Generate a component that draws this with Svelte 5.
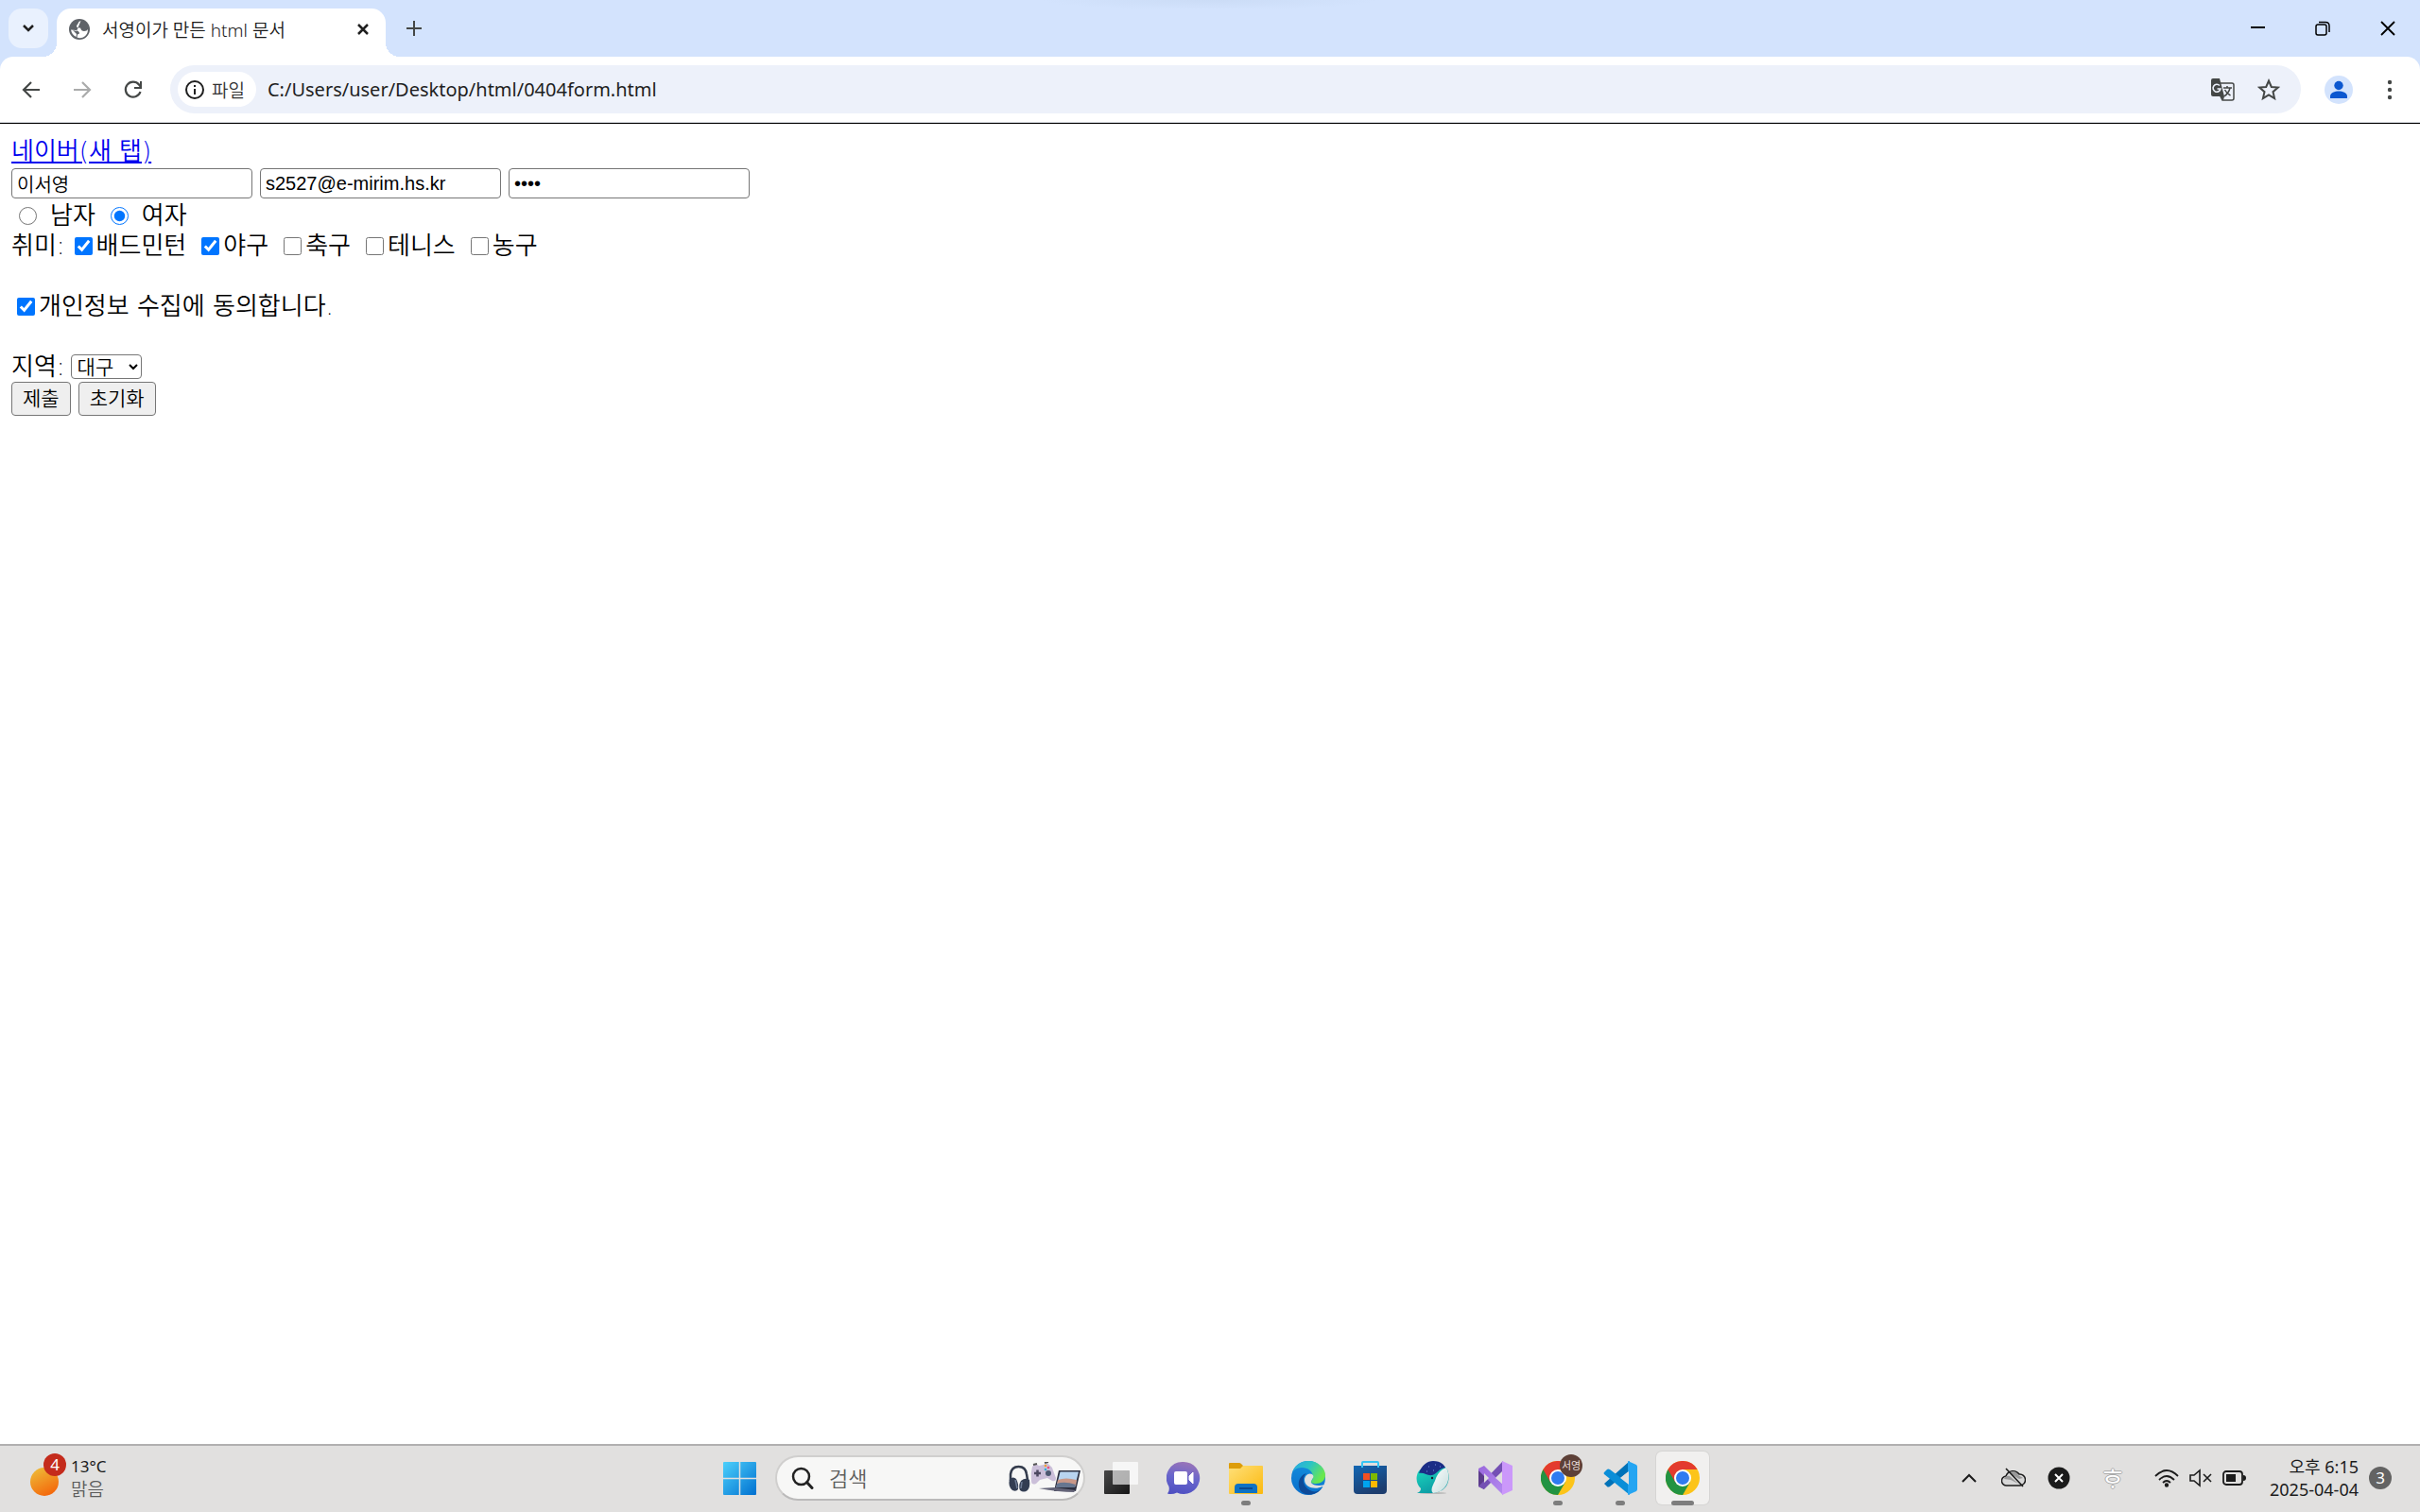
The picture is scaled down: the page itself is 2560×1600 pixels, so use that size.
<script>
  let tabTitle = '서영이가 만든 html 문서';
  let address = 'C:/Users/user/Desktop/html/0404form.html';
  let userName = '이서영';
  let email = 's2527@e-mirim.hs.kr';
  let password = '2527';
  let gender = '여자';
  let agree = true;
  let region = '대구';
  let keyword = '';
  let hobbies = [
    { name: '배드민턴', checked: true },
    { name: '야구', checked: true },
    { name: '축구', checked: false },
    { name: '테니스', checked: false },
    { name: '농구', checked: false }
  ];
  let regions = ['서울', '대구', '부산'];

  // state: '' = closed, 'open' = running, 'active' = in front
  let apps = [
    { id: 'taskview', label: '작업 보기', state: '' },
    { id: 'chat', label: '채팅', state: '' },
    { id: 'explorer', label: '파일 탐색기', state: 'open' },
    { id: 'edge', label: 'Edge', state: '' },
    { id: 'store', label: 'Store', state: '' },
    { id: 'whale', label: '웨일', state: '' },
    { id: 'vs', label: 'Visual Studio', state: '' },
    { id: 'chrome', label: 'Chrome 서영', state: 'open', badge: '서영' },
    { id: 'vscode', label: 'Visual Studio Code', state: 'open' },
    { id: 'chrome', label: 'Chrome', state: 'active' }
  ];
</script>

<svelte:head><title>{tabTitle}</title></svelte:head>

<!-- shared gradients -->
<svg class="defs" width="0" height="0" aria-hidden="true">
  <defs>
    <linearGradient id="win" x1="0" y1="0" x2="1" y2="1"><stop offset="0" stop-color="#4cd0fb" /><stop offset="1" stop-color="#0070d0" /></linearGradient>
    <linearGradient id="sun" x1="0.2" y1="0" x2="0.7" y2="1"><stop offset="0" stop-color="#eebb38" /><stop offset="1" stop-color="#f4650a" /></linearGradient>
    <linearGradient id="dark" x1="0" y1="0" x2="1" y2="1"><stop offset="0" stop-color="#484848" /><stop offset="1" stop-color="#161616" /></linearGradient>
    <linearGradient id="chatg" x1="0.6" y1="0" x2="0.4" y2="1"><stop offset="0" stop-color="#9a74b8" /><stop offset="0.5" stop-color="#6866cc" /><stop offset="1" stop-color="#4f50c2" /></linearGradient>
    <linearGradient id="folder" x1="0" y1="0" x2="1" y2="1"><stop offset="0" stop-color="#ffe07a" /><stop offset="1" stop-color="#fbb90e" /></linearGradient>
    <linearGradient id="edge1" x1="0" y1="0" x2="1" y2="0.5"><stop offset="0" stop-color="#2ba6e4" /><stop offset="0.5" stop-color="#2bc4c4" /><stop offset="1" stop-color="#6be84c" /></linearGradient>
    <linearGradient id="edge2" x1="0.5" y1="0" x2="0.3" y2="1"><stop offset="0" stop-color="#1590df" /><stop offset="1" stop-color="#0a6fcb" /></linearGradient>
    <linearGradient id="storeg" x1="0" y1="0" x2="0.5" y2="1"><stop offset="0" stop-color="#1267b4" /><stop offset="1" stop-color="#1d3d6e" /></linearGradient>
    <linearGradient id="whale1" x1="0" y1="0" x2="0.5" y2="1"><stop offset="0" stop-color="#1de0c0" /><stop offset="1" stop-color="#0c9aa4" /></linearGradient>
    <linearGradient id="whale2" x1="0" y1="0" x2="1" y2="1"><stop offset="0" stop-color="#ffffff" /><stop offset="1" stop-color="#c4dcdc" /></linearGradient>
    <linearGradient id="vs1" x1="0" y1="0" x2="1" y2="1"><stop offset="0" stop-color="#9a68dc" /><stop offset="1" stop-color="#b48af0" /></linearGradient>
  </defs>
</svg>

{#snippet appIcon(id)}
  <svg class="app-icon" viewBox="0 0 36 36" aria-hidden="true">
    {#if id === 'taskview'}
      <rect x="0" y="10" width="27" height="25" rx="1" fill="url(#dark)" />
      <rect x="9" y="1" width="27" height="24" rx="1" fill="#fff" fill-opacity="0.7" />
      <path d="M9 10h18v15H9z" fill="#999" fill-opacity="0.35" />
    {:else if id === 'chat'}
      <path d="M18 1a17 17 0 1 1-7 32.400Q6 36 1 34.500Q3.500 32 2.500 27A17 17 0 0 1 18 1z" fill="url(#chatg)" />
      <rect x="8" y="11" width="14" height="14" rx="2" fill="#fff" />
      <path d="M24 16l4-4v12l-4-4z" fill="#fff" stroke="#fff" stroke-linejoin="round" />
    {:else if id === 'explorer'}
      <path d="M0 3q0-1 1-1h10q1 0 2 1l2 2v6H0z" fill="#dd9d0a" />
      <path d="M0 8h12l3-3h20q1 0 1 1v28q0 1-1 1H1q-1 0-1-1z" fill="url(#folder)" />
      <path d="M6 34v-6q0-4 4-4h16q4 0 4 4v6z" fill="#0e72c4" />
      <path d="M11 29h14" stroke="#0a4a90" stroke-width="2" />
    {:else if id === 'edge'}
      <circle cx="18" cy="18" r="18" fill="url(#edge2)" />
      <path d="M1 12C4 4 10 0 18 0c11 0 18 8 18 15 0 6-5 9-10 9-4 0-5-1-5-2 0-2 2-2 2-5 0-6-5-10-12-10C6 7 2 10 1 12z" fill="url(#edge1)" />
      <path d="M16 13c-5 4-5 15 6 19 4 1 7 0 10-3-5 7-16 9-22 3C5 24 9 15 16 13z" fill="#0d4a98" />
      <path d="M22 14c4 3-2 6-1 9 2 3 8 4 15 2v5l-3-3c-8 4-19 1-19-7 0-4 4-8 8-6z" fill="#e1e0df" />
    {:else if id === 'store'}
      <path d="M9 7V2q0-1 1-1h15q1 0 1 1v5" fill="none" stroke="#35c5f4" stroke-width="2" />
      <path d="M0 5h35v26q0 4-4 4H4q-4 0-4-4z" fill="url(#storeg)" />
      <path d="M9 7V5M26 7V5" stroke="#35c5f4" stroke-width="2" />
      <path d="M10 13h7v7h-7z" fill="#f25022" /><path d="M18 13h7v7h-7z" fill="#7fba00" />
      <path d="M10 21h7v7h-7z" fill="#00a4ef" /><path d="M18 21h7v7h-7z" fill="#ffb900" />
    {:else if id === 'whale'}
      <ellipse cx="18" cy="34" rx="14" ry="1" fill="#b9b9b8" />
      <path d="M2 12C8 3 27 0 33 9c5 13-2 24-15 25H1c3-1 4-3 4-5C1 25 -1 19 2 12z" fill="url(#whale1)" />
      <path d="M32 7c6 12 0 26-14 27-3-3-1-7 2-13 2-7 6-12 12-14z" fill="url(#whale2)" />
      <path d="M3 13C6 4 12 0 18 0c6 0 10 2 13 7-7 1-9 7-14 8-5 1-8-3-14-2z" fill="#1b2d86" />
      <path d="M13 6h1M20 4h1M18 10h1M11 11h1M25 6h1" stroke="#7f92e0" />
      <circle cx="17" cy="18" r="1.200" fill="#123" />
    {:else if id === 'vs'}
      <path d="M0 9l6-3v24l-6-3z" fill="#5c3c8c" />
      <path d="M0 27l6 3L26 10V0z" fill="#7450b4" />
      <path d="M6 5l20 20v11L0 10V8z" fill="url(#vs1)" />
      <path d="M25 0l11 5v26l-11 5z" fill="#cb98fa" />
      <path d="M6 13l5 5-5 5zM25 12v12l-7-6z" fill="#e1e0df" />
    {:else if id === 'chrome'}
      <circle cx="18" cy="18" r="18" fill="#fcc419" />
      <path d="M2.400 9A18 18 0 0 0 18 36l7.800-13.500L18 18z" fill="#229342" />
      <path d="M2.400 9A18 18 0 0 1 33.600 9H18l-7.800 13.500z" fill="#e33b2e" />
      <circle cx="18" cy="18" r="9" fill="#fff" />
      <circle cx="18" cy="18" r="7" fill="#2f7bf0" />
    {:else if id === 'vscode'}
      <path d="M1 24l3 3q1 1 3 0L28 10V0z" fill="#0072b8" />
      <path d="M1 12l3-3q1-1 3 0l21 16v11L1 14q-1-1 0-2z" fill="#0a8ed8" />
      <path d="M26 0l9 4q1 1 1 2v24q0 1-1 2l-9 4z" fill="#25a5f2" />
      <path d="M27 11v14l-9-7z" fill="#e1e0df" />
    {/if}
  </svg>
{/snippet}

<div class="screen">
  <header>
    <div class="tabs">
      <button class="tab-search" aria-label="탭 검색">
        <svg width="14" height="14" viewBox="0 0 14 14"><path d="M2 4l5 5 5-5" fill="none" stroke="#1f1f1f" stroke-width="2.500" /></svg>
      </button>
      <div class="tab">
        <svg width="22" height="22" viewBox="0 0 22 22" aria-hidden="true">
          <circle cx="11" cy="11" r="11" fill="#5f6368" />
          <path d="M12.500 2Q10 2.500 9.500 5 7.500 7 8 8.500 9 9.500 12 9.500 13 13 16 13q3 0 4-2Q20 17 15 19.500 11 21 8.500 19.500L9 16.500 11 15.500Q11 12.500 7 12L2 11.500Q3 17 7.500 19L8 16 4 12 8 13z" fill="#fff" />
        </svg>
        <span class="tab-title">{tabTitle}</span>
        <button class="plain" aria-label="탭 닫기">
          <svg width="14" height="14" viewBox="0 0 14 14"><path d="M2 2l10 10M12 2L2 12" stroke="#1f1f1f" stroke-width="2.500" /></svg>
        </button>
      </div>
      <button class="plain new-tab" aria-label="새 탭">
        <svg width="16" height="16" viewBox="0 0 16 16"><path d="M8 0v16M0 8h16" stroke="#444746" stroke-width="2" /></svg>
      </button>
      <div class="window-buttons">
        <button class="plain" aria-label="최소화"><svg width="16" height="16" viewBox="0 0 16 16"><path d="M1 7h15" stroke="#000" stroke-width="2" /></svg></button>
        <button class="plain" aria-label="이전 크기로"><svg width="16" height="16" viewBox="0 0 16 16"><g fill="none" stroke="#000" stroke-width="1.500"><rect x="1" y="4" width="11" height="11" rx="2" /><path d="M4 1.500h7q4 0 4 4V12" /></g></svg></button>
        <button class="plain" aria-label="닫기"><svg width="16" height="16" viewBox="0 0 16 16"><path d="M1 1l14 14M15 1L1 15" stroke="#000" stroke-width="1.800" /></svg></button>
      </div>
    </div>

    <div class="toolbar">
      <div class="nav">
        <button class="plain" aria-label="뒤로"><svg width="20" height="20" viewBox="0 0 20 20"><path d="M19 10H2M10 2l-8 8 8 8" fill="none" stroke="#444746" stroke-width="2.200" /></svg></button>
        <button class="plain" aria-label="앞으로"><svg width="20" height="20" viewBox="0 0 20 20"><path d="M1 10h17M10 2l8 8-8 8" fill="none" stroke="#aaabab" stroke-width="2.200" /></svg></button>
        <button class="plain" aria-label="새로고침"><svg width="20" height="20" viewBox="0 0 20 20"><path d="M17.500 12A8 8 0 1 1 16 4.500L18 7" fill="none" stroke="#444746" stroke-width="2.200" /><path d="M19 1v8h-8V7h6V1z" fill="#444746" /></svg></button>
      </div>
      <div class="omnibox">
        <button class="chip">
          <svg width="20" height="20" viewBox="0 0 20 20"><circle cx="10" cy="10" r="9" fill="none" stroke="#1f1f1f" stroke-width="2" /><path d="M10 9v6M10 5v2" stroke="#1f1f1f" stroke-width="2" /></svg>
          파일
        </button>
        <input class="address" aria-label="주소" bind:value={address} />
        <button class="plain" aria-label="번역">
          <svg width="26" height="26" viewBox="0 0 26 26">
            <path d="M11 6h12q2 0 2 2v14q0 2-2 2H13L10 18" fill="none" stroke="#444746" stroke-width="1.500" />
            <path d="M3 1h7l5 19H3q-2 0-2-2V3q0-2 2-2z" fill="#444746" />
            <path d="M15 20h-4l3 4z" fill="#444746" />
            <path d="M10 8.500a4 4 0 1 0 1 3.500H7.500" fill="none" stroke="#edf1fa" stroke-width="1.600" />
            <path d="M14 11h9M18 9v2M21 11q-1 5-6 9M15.500 13q2 4 6 6" fill="none" stroke="#444746" stroke-width="1.500" />
          </svg>
        </button>
        <button class="plain" aria-label="북마크">
          <svg width="24" height="24" viewBox="0 0 24 24"><path d="M12 2.500l2.800 6.500 7 .6-5.300 4.600 1.600 6.900-6.100-3.700-6.100 3.700 1.600-6.900L2.200 9.600l7-.6z" fill="none" stroke="#444746" stroke-width="2" /></svg>
        </button>
      </div>
      <button class="plain profile" aria-label="프로필">
        <svg width="30" height="30" viewBox="0 0 30 30"><circle cx="15" cy="15" r="15" fill="#d3e3fd" /><circle cx="15" cy="10.500" r="4.700" fill="#0b57d0" /><path d="M6 24v-2c0-4 5-5.500 9-5.500s9 1.500 9 5.500v2z" fill="#0b57d0" /></svg>
      </button>
      <button class="plain" aria-label="메뉴">
        <svg width="6" height="22" viewBox="0 0 6 22" fill="#444746"><circle cx="3" cy="3" r="2.200" /><circle cx="3" cy="11" r="2.200" /><circle cx="3" cy="19" r="2.200" /></svg>
      </button>
    </div>
  </header>

  <main>
    <form on:submit|preventDefault>
      <div class="row"><a href="https://www.naver.com" target="_blank">네이버(새 탭)</a></div>
      <div class="row fields">
        <input type="text" aria-label="이름" bind:value={userName} />
        <input type="email" aria-label="이메일" bind:value={email} />
        <input type="password" aria-label="비밀번호" bind:value={password} />
      </div>
      <div class="row radios">
        <label><input type="radio" name="gender" value="남자" bind:group={gender} />남자</label>
        <label><input type="radio" name="gender" value="여자" bind:group={gender} />여자</label>
      </div>
      <div class="row hobbies">
        <span>취미:</span>
        {#each hobbies as hobby}
          <label><input type="checkbox" bind:checked={hobby.checked} />{hobby.name}</label>
        {/each}
      </div>
      <div class="row consent">
        <label><input type="checkbox" bind:checked={agree} />개인정보 수집에 동의합니다.</label>
      </div>
      <div class="row region">
        <label for="region">지역:</label>
        <select id="region" bind:value={region}>
          {#each regions as r}
            <option value={r}>{r}</option>
          {/each}
        </select>
      </div>
      <div class="buttons">
        <button type="submit">제출</button>
        <button type="reset">초기화</button>
      </div>
    </form>
  </main>

  <footer>
    <div class="weather">
      <svg width="40" height="40" viewBox="0 0 40 40" aria-hidden="true"><circle cx="15" cy="24" r="15" fill="url(#sun)" /></svg>
      <span class="alert">4</span>
      <div class="weather-text">
        <span>13°C</span>
        <span class="sky">맑음</span>
      </div>
    </div>

    <div class="center">
      <button class="slot" aria-label="시작">
        <svg class="app-icon" viewBox="0 0 36 36"><rect x="1" y="1" width="35" height="35" rx="1" fill="url(#win)" /><path d="M18.500 1v35M1 18.500h35" stroke="#e1e0df" stroke-width="1.500" /></svg>
      </button>
      <label class="search">
        <svg width="24" height="24" viewBox="0 0 24 24"><circle cx="10.500" cy="10.500" r="8.500" fill="none" stroke="#222" stroke-width="2.500" /><path d="M16.500 16.500l5.500 6" stroke="#222" stroke-width="3" stroke-linecap="round" /></svg>
        <input aria-label="검색" placeholder="검색" bind:value={keyword} />
        <svg width="77" height="34" viewBox="0 0 77 34" aria-hidden="true">
          <path d="M3 20V13Q4 5 11.500 5T20 13l1 6" fill="none" stroke="#333b4c" stroke-width="2.500" />
          <path d="M2 18q4-3 7 0 3 6 2 11-2 3-6 1-5-4-3-12zM14 20q5-4 9-1 1 8-2 11-4 3-8 0-2-5 1-10z" fill="#333d52" />
          <path d="M8 19l2 9M15 21l-1 7" stroke="#6c7a94" stroke-width="1.500" />
          <path d="M26 5q3-4 7-1l5-1q3-3 6 0 3 2 4 6l3 8q0 4-4 3l-5-3-8 2-4 4q-5 2-5-3-1-8 1-15z" fill="#cbbfd9" />
          <path d="M27 3l4-1M39 1l4-1" stroke="#555" stroke-width="2" />
          <path d="M28 12h7M31.500 8.500v7" stroke="#4c4860" stroke-width="2.500" />
          <circle cx="43" cy="12" r="3" fill="#4c5870" /><circle cx="40" cy="4" r="1.300" fill="#f0a030" /><circle cx="43" cy="6" r="1.300" fill="#e45080" /><circle cx="40" cy="8" r="1.300" fill="#30b0d0" />
          <path d="M54 9h23l-5 22H49z" fill="#2c3040" />
          <path d="M55.500 10.500H75l-4 16H51.500z" fill="#b8d4f0" />
          <path d="M53 19q8-3 20 0l-1 7H51.500z" fill="#c99888" /><path d="M52 23q8-3 20 1l-1 3H51z" fill="#667690" />
          <path d="M33 28l16-1 23 3-2 2q-16 0-37-4z" fill="#646478" />
        </svg>
      </label>
      {#each apps as app}
        <button class="slot {app.state}" aria-label={app.label}>
          {@render appIcon(app.id)}
          {#if app.badge}<span class="app-badge">{app.badge}</span>{/if}
        </button>
      {/each}
    </div>

    <div class="tray">
      <button class="plain" aria-label="숨겨진 아이콘"><svg width="18" height="12" viewBox="0 0 18 12"><path d="M2 10l7-7 7 7" fill="none" stroke="#1b1b1b" stroke-width="2" /></svg></button>
      <svg class="cloud" width="26" height="22" viewBox="0 0 26 22" aria-label="OneDrive" role="img">
        <path d="M6 19a5 5 0 0 1-1-10 8 8 0 0 1 14-2 6 6 0 0 1 1 12z" fill="#d8d8d8" stroke="#1b1b1b" stroke-width="1.500" />
        <path d="M3 12Q5 8 9 9L18 17 10 13z" fill="#999" /><path d="M9 5q6-3 9 3l5 3-4 1-7-4z" fill="#999" />
        <path d="M5 1l18 19" stroke="#1b1b1b" stroke-width="1.600" />
      </svg>
      <svg width="24" height="24" viewBox="0 0 24 24" aria-hidden="true"><circle cx="12" cy="12" r="11.500" fill="#1b1b1b" /><path d="M8 8l8 8M16 8l-8 8" stroke="#fff" stroke-width="2" /></svg>
      <span class="ime">ᄒᆞ</span>
      <div class="status">
        <svg width="26" height="20" viewBox="0 0 26 20" fill="none" stroke="#1b1b1b" stroke-width="1.800" aria-hidden="true"><path d="M1 8q12-12 24 0M5 12q8-8 16 0M9 15q4-4 8 0" /><circle cx="13" cy="17.500" r="1.300" fill="#1b1b1b" /></svg>
        <svg width="24" height="20" viewBox="0 0 24 20" fill="none" stroke="#1b1b1b" stroke-width="1.600" aria-hidden="true"><path d="M1 7h4l6-5v16l-6-5H1zM15 6l8 8M23 6l-8 8" /></svg>
        <svg width="26" height="18" viewBox="0 0 26 18" aria-hidden="true"><rect x="1" y="2" width="20" height="14" rx="3" fill="none" stroke="#1b1b1b" stroke-width="1.800" /><path d="M4 5h10v8H4zM22 6q3 0 3 3t-3 3z" fill="#1b1b1b" /></svg>
      </div>
      <div class="clock">
        <span>오후 6:15</span>
        <span>2025-04-04</span>
      </div>
      <span class="count">3</span>
    </div>
  </footer>
</div>

<style>
  :global(body) {
    margin: 0;
    background: #fff;
  }

  .defs {
    position: absolute;
  }

  .screen {
    display: flex;
    flex-direction: column;
    min-height: 100vh;
    font-family: "Noto Sans", "Noto Sans CJK KR", sans-serif;
    color: #1b1b1b;
  }

  button, input, select {
    font-family: inherit;
    font-weight: inherit;
  }

  svg {
    display: block;
    flex-shrink: 0;
  }

  .plain {
    padding: 0;
    border: none;
    background: none;
  }

  header {
    background: #d3e3fd;
    border-bottom: 1px solid #000;
  }

  .tabs {
    display: flex;
    align-items: center;
    height: 60px;
    padding-left: 9px;
    background: radial-gradient(ellipse 180px 10px at 50% 0, #cbdcf6, #d3e3fd);
  }

  .tab-search {
    display: grid;
    place-items: center;
    width: 42px;
    height: 42px;
    padding: 0;
    border: none;
    border-radius: 14px;
    background: #e9f1fe;
  }

  .tab {
    position: relative;
    display: flex;
    align-items: center;
    align-self: flex-end;
    box-sizing: border-box;
    width: 348px;
    height: 51px;
    margin-left: 9px;
    padding: 0 17px 8px 13px;
    border-radius: 15px 15px 0 0;
    background: #fff;
  }

  /* curved feet of the active tab */
  .tab::before, .tab::after {
    content: "";
    position: absolute;
    bottom: 0;
    width: 15px;
    height: 15px;
  }

  .tab::before {
    right: 100%;
    background: radial-gradient(circle at 0 0, transparent 15px, #fff 15px);
  }

  .tab::after {
    left: 100%;
    background: radial-gradient(circle at 100% 0, transparent 15px, #fff 15px);
  }

  .tab-title {
    flex: 1;
    margin-left: 13px;
    font-size: 19px;
    font-weight: 350;
    white-space: nowrap;
  }

  .new-tab {
    margin-left: 22px;
  }

  .window-buttons {
    display: flex;
    gap: 53px;
    margin-left: auto;
    padding-right: 26px;
  }

  .toolbar {
    display: flex;
    align-items: center;
    height: 69px;
    padding-right: 29px;
    border-bottom: 1px solid #d5d8de;
    border-radius: 14px 14px 0 0;
    background: #fff;
  }

  .nav {
    display: flex;
    gap: 34px;
    padding: 0 29px 0 23px;
  }

  .omnibox {
    display: flex;
    align-items: center;
    flex: 1;
    gap: 24px;
    box-sizing: border-box;
    height: 51px;
    padding: 0 22px 0 8px;
    border-radius: 26px;
    background: #edf1fa;
  }

  .chip {
    display: flex;
    align-items: center;
    gap: 8px;
    height: 37px;
    padding: 0 12px 0 8px;
    border: none;
    border-radius: 19px;
    background: #fff;
    color: #333;
    font-size: 19px;
    font-weight: 350;
    white-space: nowrap;
  }

  .address {
    flex: 1;
    margin-left: -12px;
    padding: 0;
    border: none;
    outline: none;
    background: none;
    color: #1f1f1f;
    font-size: 20px;
  }

  .profile {
    margin: 0 36px 0 25px;
  }

  main {
    flex: 1;
    padding: 13px 12px;
    font-family: "DejaVu Sans", "Noto Sans CJK KR", sans-serif;
    font-size: 26px;
    font-weight: 350;
    line-height: 32px;
    color: #000;
  }

  .row {
    display: flex;
    align-items: center;
    height: 32px;
  }

  .row label {
    display: flex;
    align-items: center;
    gap: 4px;
  }

  a {
    color: #0000ee;
  }

  .row.fields {
    gap: 8px;
    height: 36px;
  }

  .fields input {
    box-sizing: border-box;
    width: 255px;
    height: 32px;
    padding: 2px 5px;
    border: 1px solid #767676;
    border-radius: 4px;
    font-family: "Liberation Sans", "Noto Sans CJK KR", sans-serif;
    font-size: 20px;
  }

  input[type="radio"], input[type="checkbox"] {
    width: 19px;
    height: 19px;
    margin: 0;
  }

  .radios {
    gap: 16px;
    padding-left: 8px;
  }

  .row.radios label {
    gap: 14px;
  }

  .hobbies {
    gap: 16px;
  }

  .hobbies span {
    margin-right: -6px;
  }

  .consent {
    margin: 32px 0;
    padding-left: 6px;
  }

  .region {
    gap: 6px;
  }

  select {
    width: 75px;
    height: 26px;
    padding: 0 2px;
    border: 1px solid #767676;
    border-radius: 4px;
    background: #fff;
    color: #000;
    font-size: 21px;
    line-height: 24px;
  }

  .buttons {
    display: flex;
    gap: 8px;
  }

  .buttons button {
    height: 36px;
    padding: 0 11px;
    border: 1px solid #767676;
    border-radius: 4px;
    background: #efefef;
    color: #000;
    font-size: 21px;
    line-height: 32px;
  }

  footer {
    display: grid;
    grid-template-columns: 1fr auto 1fr;
    align-items: center;
    height: 68px;
    padding-bottom: 2px;
    border-top: 2px solid #b1b0b0;
    background: #e1e0df;
  }

  .weather {
    position: relative;
    display: flex;
    align-items: center;
    padding-left: 32px;
  }

  .alert {
    position: absolute;
    left: 46px;
    top: -2px;
    width: 24px;
    height: 24px;
    border-radius: 50%;
    background: #c42b1c;
    color: #fff;
    font-size: 17px;
    line-height: 24px;
    text-align: center;
  }

  .weather-text, .clock {
    display: flex;
    flex-direction: column;
    font-size: 18px;
    line-height: 24px;
  }

  .weather-text {
    margin-left: 3px;
    font-size: 17px;
  }

  .sky {
    color: #5c5c5c;
    font-size: 19px;
    font-weight: 350;
  }

  .center {
    display: flex;
    align-items: center;
    padding-left: 2px;
  }

  .slot {
    position: relative;
    display: grid;
    place-items: center;
    width: 56px;
    height: 56px;
    margin: 0 5px;
    padding: 0;
    border: none;
    border-radius: 6px;
    background: none;
  }

  .app-icon {
    width: 36px;
    height: 36px;
  }

  .open::after, .active::after {
    content: "";
    position: absolute;
    bottom: -1px;
    left: 50%;
    width: 10px;
    height: 5px;
    margin-left: -5px;
    border-radius: 3px;
    background: #7d7d7d;
  }

  .active {
    background: #f1f0ef;
    box-shadow: 0 0 0 1px #d6d5d4;
  }

  .active::after {
    width: 24px;
    margin-left: -12px;
  }

  .app-badge {
    position: absolute;
    right: 2px;
    top: 3px;
    width: 24px;
    height: 24px;
    border-radius: 50%;
    background: #5d4037;
    color: #e8dfdc;
    font-size: 11px;
    line-height: 24px;
    text-align: center;
  }

  .search {
    display: flex;
    align-items: center;
    box-sizing: border-box;
    width: 328px;
    height: 48px;
    margin: 0 5px;
    padding: 0 3px 0 15px;
    border: 2px solid #d0cfce;
    border-bottom-color: #bbbaba;
    border-radius: 24px;
    background: #f7f7f6;
  }

  .search input {
    flex: 1;
    min-width: 0;
    margin-left: 16px;
    padding: 0;
    border: none;
    outline: none;
    background: none;
    font-size: 22px;
    font-weight: 350;
  }

  .search input::placeholder {
    color: #5f5f5f;
  }

  .tray {
    display: flex;
    align-items: center;
    justify-content: flex-end;
    padding-right: 30px;
  }

  .cloud {
    margin: 0 23px 0 25px;
  }

  .ime {
    width: 24px;
    margin: 0 32px 0 33px;
    color: #fff;
    font-family: "Noto Sans CJK KR", sans-serif;
    font-size: 25px;
    line-height: 28px;
    text-align: center;
    text-shadow: 1px 0 #aaa, -1px 0 #aaa, 0 1px #aaa, 0 -1px #aaa;
  }

  .status {
    display: flex;
    align-items: center;
    gap: 11px;
  }

  .clock {
    align-items: flex-end;
    margin: 0 11px 0 24px;
  }

  .count {
    width: 24px;
    height: 24px;
    border-radius: 50%;
    background: #636363;
    color: #fff;
    font-size: 17px;
    line-height: 24px;
    text-align: center;
  }
</style>
